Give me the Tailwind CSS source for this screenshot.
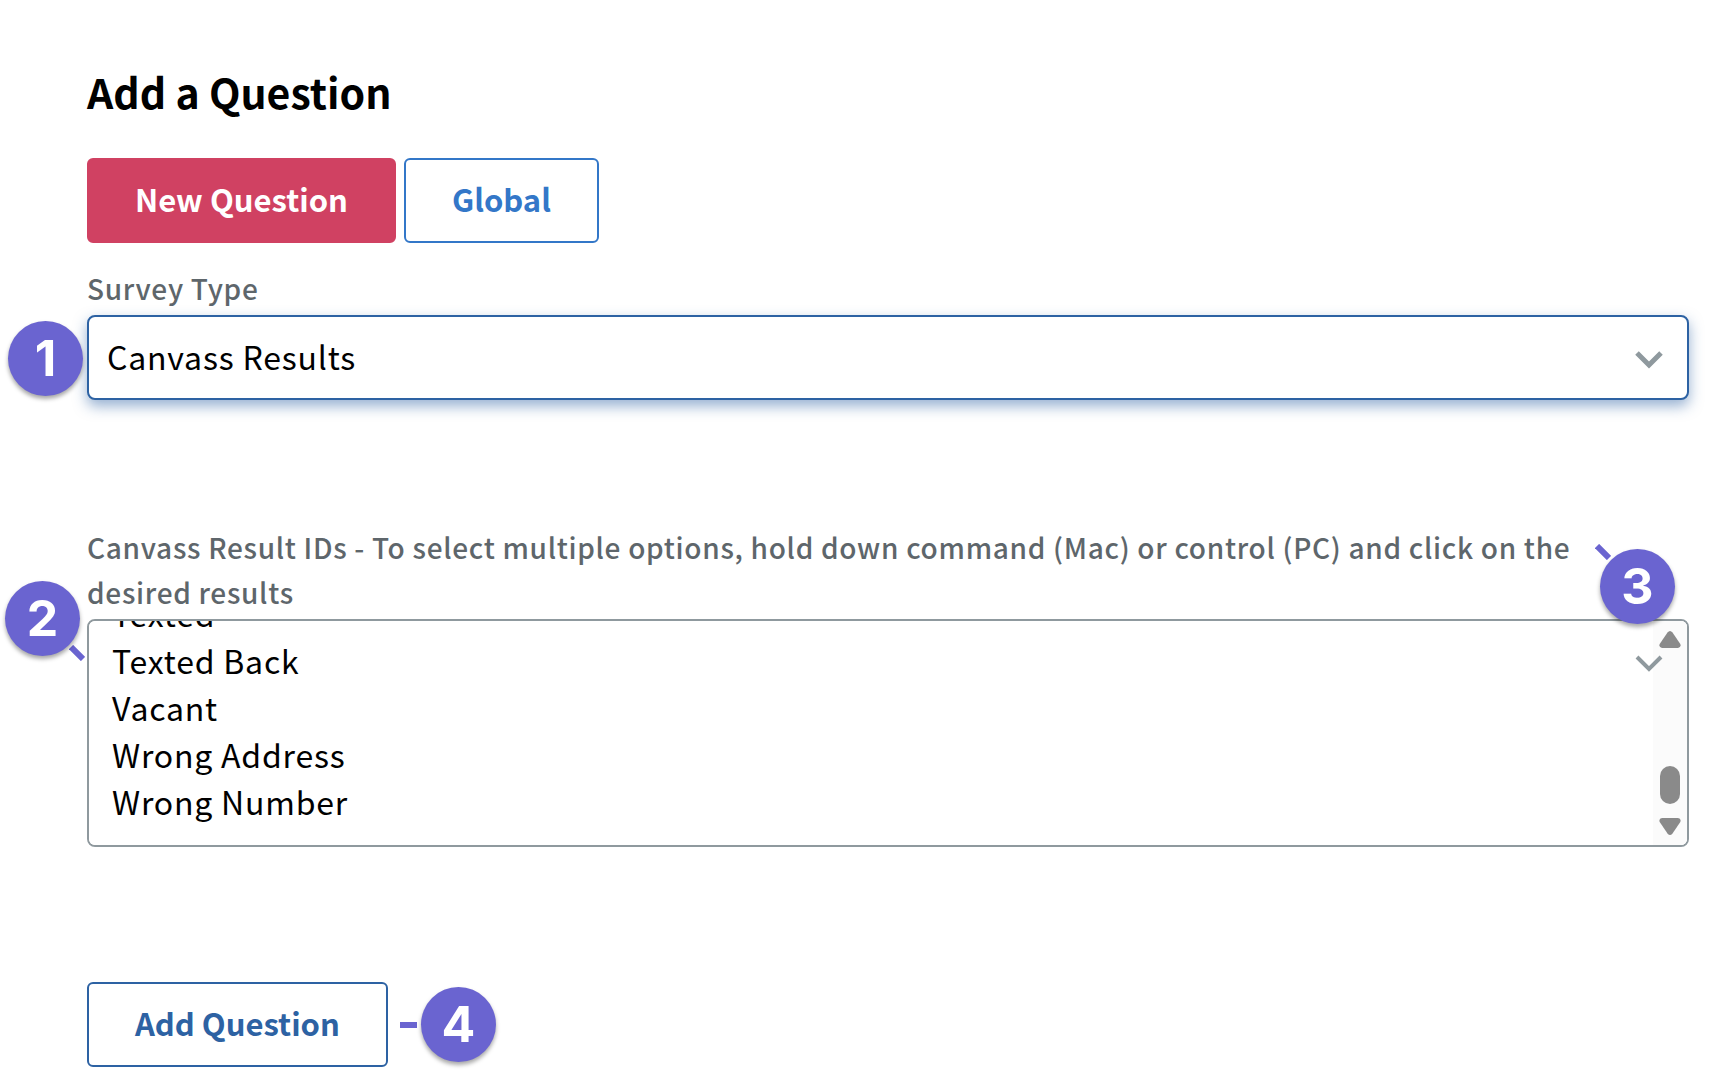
<!DOCTYPE html>
<html lang="en">
<head>
    <meta charset="UTF-8">
    <meta name="viewport" content="width=device-width, initial-scale=1.0">
    <title>Add a Question</title>
    <script src="https://cdn.jsdelivr.net/npm/@tailwindcss/browser@4"></script>
</head>
<body class="bg-white font-['Noto_Sans_CJK_SC','Noto_Sans',sans-serif] text-black">
    <form class="pt-[59px] pr-[21px] pb-6 pl-[87px]">
        <h1 class="text-[41px] leading-[64px] font-bold">Add a Question</h1>

        <div class="mt-[35px] flex gap-2">
            <button type="button" class="h-[85px] rounded-md border-2 border-[#d04162] bg-[#d04162] px-[46px] pb-[2px] text-[31px] font-bold text-white">New Question</button>
            <button type="button" class="h-[85px] rounded-md border-2 border-[#3377c8] bg-white px-[46px] pb-[2px] text-[31px] font-bold text-[#3377c8]">Global</button>
        </div>

        <!-- Survey type -->
        <div class="mt-[23px]">
            <label for="surveyType" class="block text-[28px] leading-[45px] font-medium tracking-wide text-[#5e666b]">Survey Type</label>
            <div class="relative mt-1">
                <select id="surveyType" class="block h-[85px] w-full appearance-none rounded-lg border-2 border-[#2d62a3] bg-white px-[18px] pb-1 text-[32px] tracking-wide shadow-[0_6px_14px_rgba(45,98,163,0.5)] outline-none">
                    <option selected>Canvass Results</option>
                </select>
                <svg class="pointer-events-none absolute top-9 right-[26px] h-[19px] w-7" viewBox="0 0 28 19" fill="none" stroke="#8f999e" stroke-width="5"><path d="M2 2L14 14L26 2"/></svg>
                <span class="absolute top-[6px] -left-[79px] flex size-[75px] items-center justify-center rounded-full bg-[#6a64d0] font-[Inter,sans-serif] text-[50px] font-bold text-white shadow-[0_3px_4px_rgba(0,0,0,0.35)]">1</span>
            </div>
        </div>

        <!-- Result IDs -->
        <div class="mt-[125px]">
            <label for="resultIds" class="block pr-20 text-[28px] leading-[45px] font-medium tracking-wide text-[#5e666b]">Canvass Result IDs - To select multiple options, hold down command (Mac) or control (PC) and click on the desired results</label>
            <div class="relative mt-1">
                <select id="resultIds" multiple class="block h-[228px] w-full appearance-none overflow-y-scroll rounded-lg border-2 border-[#8f999e] bg-white px-5 pt-4 pb-5 text-[32px] tracking-wide outline-none [scrollbar-width:none]">
                    <option class="h-[47px] px-[3px] py-0 leading-[47px]">Texted</option>
                    <option class="h-[47px] px-[3px] py-0 leading-[47px]">Texted Back</option>
                    <option class="h-[47px] px-[3px] py-0 leading-[47px]">Vacant</option>
                    <option class="h-[47px] px-[3px] py-0 leading-[47px]">Wrong Address</option>
                    <option class="h-[47px] px-[3px] py-0 leading-[47px]">Wrong Number</option>
                </select>
                <!-- Scrollbar -->
                <div class="pointer-events-none absolute inset-y-[2px] right-[2px] flex w-[34px] flex-col items-center rounded-r-md bg-[#fbfbfb] py-[10px]">
                    <svg class="h-[17px] w-[22px]" viewBox="0 0 22 17" fill="#8a8a8a"><path d="M8.500 1.500Q11 -1.500 13.500 1.500L21.300 13Q22.500 16.500 19 17H3Q-0.500 16.500 0.700 13Z"/></svg>
                    <div class="mt-auto h-[38px] w-5 rounded-full bg-[#8a8a8a]"></div>
                    <svg class="mt-[14px] h-[17px] w-[22px]" viewBox="0 0 22 17" fill="#8a8a8a"><path d="M8.500 15.500Q11 18.500 13.500 15.500L21.300 4Q22.500 0.500 19 0H3Q-0.500 0.500 0.700 4Z"/></svg>
                </div>
                <svg class="pointer-events-none absolute top-9 right-[26px] h-[19px] w-7" viewBox="0 0 28 19" fill="none" stroke="#8f999e" stroke-width="4"><path d="M2 2L14 14L26 2"/></svg>

                <svg class="absolute top-[26px] -left-[18px] size-4" viewBox="0 0 16 16" stroke="#6a64d0" stroke-width="6"><path d="M2 2L14 14"/></svg>
                <span class="absolute -top-[38px] -left-[82px] flex size-[75px] items-center justify-center rounded-full bg-[#6a64d0] font-[Inter,sans-serif] text-[50px] font-bold text-white shadow-[0_3px_4px_rgba(0,0,0,0.35)]">2</span>

                <svg class="absolute -top-[75px] right-[78px] size-4" viewBox="0 0 16 16" stroke="#6a64d0" stroke-width="6"><path d="M2 2L14 14"/></svg>
                <span class="absolute -top-[70px] right-[14px] flex size-[75px] items-center justify-center rounded-full bg-[#6a64d0] font-[Inter,sans-serif] text-[50px] font-bold text-white shadow-[0_3px_4px_rgba(0,0,0,0.35)]">3</span>
            </div>
        </div>

        <div class="mt-[135px] flex items-center">
            <button type="button" class="h-[85px] rounded-md border-2 border-[#2d62a3] bg-white px-[46px] pb-[2px] text-[31px] font-bold text-[#2d62a3]">Add Question</button>
            <span class="ml-3 h-[6px] w-[17px] bg-[#6a64d0]"></span>
            <span class="ml-1 flex size-[75px] items-center justify-center rounded-full bg-[#6a64d0] font-[Inter,sans-serif] text-[50px] font-bold text-white shadow-[0_3px_4px_rgba(0,0,0,0.35)]">4</span>
        </div>
    </form>

    <script>
        // Open the list at its last results
        function showLastResults() {
            const resultIds = document.getElementById('resultIds');
            resultIds.scrollTop = resultIds.scrollHeight;
        }
        window.addEventListener('load', function () {
            requestAnimationFrame(function () {
                requestAnimationFrame(showLastResults);
            });
        });
    </script>
</body>
</html>
